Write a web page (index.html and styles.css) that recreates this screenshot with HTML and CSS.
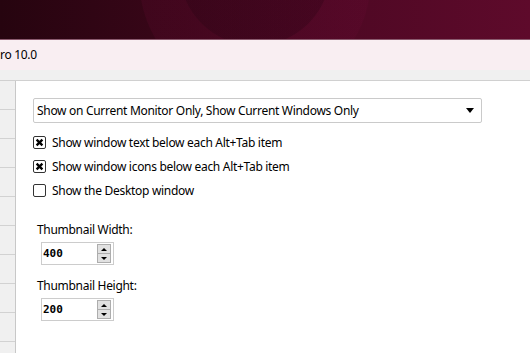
FILE: index.html
```html
<!DOCTYPE html>
<html lang="en">

<head>
    <meta charset="UTF-8">
    <title>Alt+Tab Settings</title>
    <link rel="stylesheet" href="styles.css">
</head>

<body>
    <!-- Desktop wallpaper behind the window -->
    <div class="wallpaper"></div>

    <!-- Window title -->
    <div class="titlebar">ro 10.0</div>
    <div class="menu-strip"></div>

    <div class="main">
        <!-- Left list (cut off) -->
        <div class="sidebar">
            <div class="side-row"></div>
            <div class="side-row"></div>
            <div class="side-row"></div>
            <div class="side-row"></div>
            <div class="side-row"></div>
            <div class="side-row"></div>
            <div class="side-row"></div>
            <div class="side-row"></div>
            <div class="side-row"></div>
        </div>

        <div class="content">
            <div class="dropdown">
                <span>Show on Current Monitor Only, Show Current Windows Only</span>
                <span class="arrow"></span>
            </div>

            <label class="check-row">
                <span class="box checked">
                    <svg viewBox="0 0 11 11"><path d="M2.6 2.6 L8.4 8.4 M8.4 2.6 L2.6 8.4" /></svg>
                </span>
                Show window text below each Alt+Tab item
            </label>
            <label class="check-row">
                <span class="box checked">
                    <svg viewBox="0 0 11 11"><path d="M2.6 2.6 L8.4 8.4 M8.4 2.6 L2.6 8.4" /></svg>
                </span>
                Show window icons below each Alt+Tab item
            </label>
            <label class="check-row">
                <span class="box"></span>
                Show the Desktop window
            </label>

            <div class="field first">
                <div class="field-label">Thumbnail Width:</div>
                <div class="spinner">
                    <span class="spin-value">400</span>
                    <span class="spin-btns">
                        <span class="spin-btn"><i class="up"></i></span>
                        <span class="spin-btn"><i class="down"></i></span>
                    </span>
                </div>
            </div>

            <div class="field">
                <div class="field-label">Thumbnail Height:</div>
                <div class="spinner">
                    <span class="spin-value">200</span>
                    <span class="spin-btns">
                        <span class="spin-btn"><i class="up"></i></span>
                        <span class="spin-btn"><i class="down"></i></span>
                    </span>
                </div>
            </div>
        </div>
    </div>
</body>

</html>
```

FILE: styles.css
```css
/* General */
body {
    margin: 0;
    width: 530px;
    height: 353px;
    overflow: hidden;
    font-family: 'Noto Sans', sans-serif;
    font-size: 12px;
    letter-spacing: -0.3px;
    color: #000;
    background: #fff;
}

/* Wallpaper */
.wallpaper {
    height: 39px;
    background:
        radial-gradient(circle at 255px -30px, rgba(25, 0, 12, 0.22) 0 75px, transparent 76px),
        radial-gradient(circle at 255px -20px, rgba(110, 10, 55, 0.18) 0 115px, transparent 116px),
        linear-gradient(90deg, #26040f 0%, #3a0619 35%, #4f0824 65%, #5e0a2b 100%);
}

/* Title bar */
.titlebar {
    height: 31px;
    line-height: 30px;
    background: #f9eef2;
    border-top: 1px solid #8a5a6e;
    box-sizing: border-box;
}

.menu-strip {
    height: 10px;
    background: #f0f0f0;
    border-bottom: 1px solid #d0d0d0;
}

/* Main area */
.main {
    display: flex;
}

.sidebar {
    width: 15px;
    background: #f0f0f0;
    border-right: 1px solid #c8c8c8;
    height: 272px;
}

.side-row {
    height: 28px;
    border-bottom: 1px solid #d2d2d2;
}

.content {
    padding: 17px 0 0 17px;
}

/* Dropdown */
.dropdown {
    width: 438px;
    height: 23px;
    border: 1px solid #cacaca;
    border-radius: 2px;
    display: flex;
    align-items: center;
    justify-content: space-between;
    padding: 0 6px 0 3px;
}

.arrow {
    width: 0;
    height: 0;
    border-left: 4px solid transparent;
    border-right: 4px solid transparent;
    border-top: 5px solid #000;
    margin-right: 1px;
}

/* Checkboxes */
.check-row {
    display: flex;
    align-items: center;
    height: 24px;
    gap: 6px;
}

.check-row:first-of-type {
    margin-top: 7px;
}

.box {
    width: 11px;
    height: 11px;
    border: 1px solid #333;
    border-radius: 2px;
    background: #fff;
    display: flex;
}

.box svg {
    width: 11px;
    height: 11px;
}

.box path {
    stroke: #000;
    stroke-width: 2.3;
    fill: none;
}

/* Number fields */
.field {
    margin-top: 13px;
}

.field.first {
    margin-top: 20px;
}

.field-label {
    height: 16px;
    line-height: 16px;
    padding-left: 4px;
}

.spinner {
    margin: 4px 0 0 8px;
    width: 71px;
    height: 21px;
    border: 1px solid #cccccc;
    display: flex;
    align-items: center;
    justify-content: space-between;
}

.spin-value {
    font-family: 'DejaVu Sans Mono', monospace;
    font-weight: bold;
    font-size: 11px;
    letter-spacing: 0;
    padding-left: 1px;
}

.spin-btns {
    display: flex;
    flex-direction: column;
    margin-right: 2px;
    border: 1px solid #adadad;
}

.spin-btn {
    width: 12px;
    height: 8px;
    background: #e1e1e1;
    display: flex;
    align-items: center;
    justify-content: center;
}

.spin-btn + .spin-btn {
    border-top: 1px solid #adadad;
}

.spin-btn i {
    width: 0;
    height: 0;
    border-left: 3px solid transparent;
    border-right: 3px solid transparent;
}

.spin-btn .up {
    border-bottom: 3px solid #000;
}

.spin-btn .down {
    border-top: 3px solid #000;
}
```
